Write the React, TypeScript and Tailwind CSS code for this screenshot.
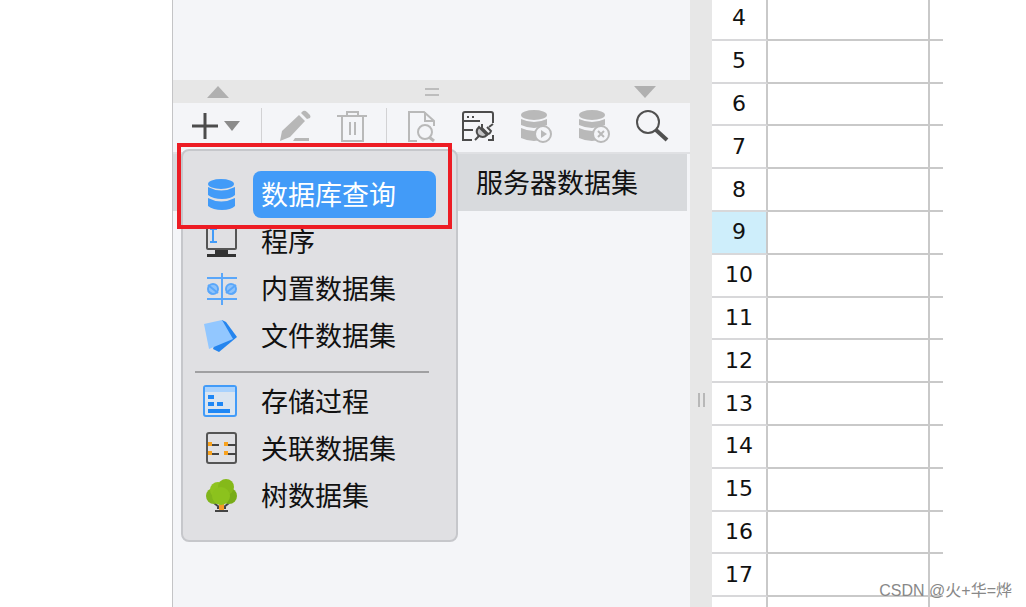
import type { ReactNode } from "react";
import { clsx } from "clsx";

function PencilIcon() {
	return (
		<svg viewBox="0 0 32 32" className="size-8" fill="#b7b7b7">
			<path d="M0 31l2-10L19 5l6 6L10 27zM21 3l2-2q2-1 4 1l3 3q1 2 0 3l-3 1z" />
			<path d="M15 28h14v3H13z" />
		</svg>
	);
}

function TrashIcon() {
	return (
		<svg viewBox="0 0 32 32" className="size-8" fill="none" stroke="#b9b9b9" strokeWidth="2">
			<path d="M1 6h30M11 6V2h11v4M6 6v25h21V6M14 12v13M19 12v13" />
		</svg>
	);
}

function PreviewIcon() {
	return (
		<svg viewBox="0 0 32 32" className="size-8" fill="none" stroke="#b9b9b9" strokeWidth="2">
			<path d="M12 31H4V2h15l10 9v5M20 2v9h9" />
			<circle cx="20" cy="22" r="7" />
			<path d="M24 27l5 4" strokeWidth="3" />
		</svg>
	);
}

function ConnectionIcon() {
	return (
		<svg viewBox="0 0 34 32" className="h-8 w-[34px]" fill="none" stroke="#4c4c4c" strokeWidth="2">
			<path d="M11 30H2V4q0-2 2-2h26q2 0 2 2v9M2 11h17M2 20h10" />
			<path d="M6 7h2M11 7h2" />
			<path d="M14 30l4-4M28 17l4-3M27 30h5v-5" />
			<path d="M18 17q-4 4-1 8q5 4 9 0l-8-8z" fill="#c4c4c6" />
			<path d="M21 14v4l6 6q2 0 3-3l-4-4" />
		</svg>
	);
}

function DatabaseIcon({ badge }: { badge: "run" | "stop" }) {
	return (
		<svg viewBox="0 0 34 34" className="size-[34px]" fill="#b9b9b9">
			<ellipse cx="15" cy="6" rx="13" ry="5" />
			<path d="M2 10q13 6 26 0v6q-13 6-26 0z" />
			<path d="M2 19q13 6 26 0v10q-13 6-26 0z" />
			<circle cx="24" cy="25" r="8" fill="#f4f5f8" stroke="#b9b9b9" strokeWidth="2" />
			{badge === "run" ? (
				<path d="M22 21l6 4-6 4z" />
			) : (
				<path d="M21 22l6 6M27 22l-6 6" stroke="#b9b9b9" strokeWidth="2" />
			)}
		</svg>
	);
}

function SearchIcon() {
	return (
		<svg viewBox="0 0 34 34" className="size-[34px]" fill="none" stroke="#505050">
			<circle cx="13" cy="13" r="11" strokeWidth="2" />
			<path d="M21 21l11 10" strokeWidth="4" />
		</svg>
	);
}

function QueryIcon() {
	return (
		<svg viewBox="0 0 34 34" className="size-[34px]" fill="#429bf8">
			<ellipse cx="18" cy="6" rx="13" ry="5" />
			<path d="M5 9q13 7 27 0v8q-4 4-13 4T5 17z" />
			<path d="M5 20q13 7 27 0v8q-4 4-13 4T5 28z" />
		</svg>
	);
}

function ProgramIcon() {
	return (
		<svg viewBox="0 0 34 34" className="size-[34px]" fill="none">
			<rect x="4" y="1" width="29" height="23" rx="1" stroke="#555" strokeWidth="2" />
			<path d="M12 25h13v4h8v3H4v-3h8z" fill="#333" />
			<path d="M7 4h7M10 4v13M7 17h7" stroke="#429bf8" strokeWidth="2" />
		</svg>
	);
}

function BuiltInIcon() {
	return (
		<svg viewBox="0 0 34 34" className="size-[34px]" fill="none" stroke="#5aa7fa" strokeWidth="2">
			<path d="M4 6h30M4 27h30M19 1v32" />
			<circle cx="10" cy="17" r="5" fill="#8ec3fb" />
			<circle cx="28" cy="17" r="5" fill="#8ec3fb" />
			<path d="M5 13l10 8M33 13l-10 8M5 19l4 3M33 19l-4 3" />
		</svg>
	);
}

function FileIcon() {
	return (
		<svg viewBox="0 0 34 34" className="size-[34px]">
			<path d="M19 1l4 2 11 15-18 15-6-3z" fill="#2585ee" />
			<path d="M1 5l18-4 11 19-24 10z" fill="#92c7ff" />
		</svg>
	);
}

function ProcedureIcon() {
	return (
		<svg viewBox="0 0 34 34" className="size-[34px]" fill="#1f87f5">
			<rect x="1" y="1" width="32" height="30" rx="2" fill="#dbe5f0" stroke="#429bf8" strokeWidth="2" />
			<path d="M2 2h30v5H2z" fill="#a9d2fd" />
			<path d="M5 10h6v4H5zM5 17h6v4H5zM14 17h6v4h-6zM5 24h22v4H5z" />
		</svg>
	);
}

function RelationIcon() {
	return (
		<svg viewBox="0 0 34 34" className="size-[34px]" fill="none">
			<rect x="4" y="1" width="29" height="30" rx="2" stroke="#555" strokeWidth="2" />
			<path d="M8 13h8M25 13h8M8 22h8M25 22h8" stroke="#444" strokeWidth="2" />
			<path d="M5 10h4v4H5zM5 19h4v4H5zM21 10h4v4h-4zM21 19h4v4h-4z" fill="#f9a21d" />
		</svg>
	);
}

function TreeIcon() {
	return (
		<svg viewBox="0 0 34 34" className="size-[34px]">
			<path d="M11 24l5 4M26 24l-5 4M12 32h13M14 29h9" stroke="#444" strokeWidth="2" />
			<path d="M16 22h5v9h-5z" fill="#f59a28" />
			<circle cx="11" cy="17" r="8" fill="#80b51c" />
			<circle cx="26" cy="17" r="8" fill="#78ac18" />
			<circle cx="15" cy="11" r="8" fill="#8fc31f" />
			<circle cx="23" cy="8" r="8" fill="#85b919" />
			<circle cx="18" cy="17" r="9" fill="#8cc21d" />
		</svg>
	);
}

const menuGroups: { label: string; icon: ReactNode }[][] = [
	[
		{ label: "数据库查询", icon: <QueryIcon /> },
		{ label: "程序", icon: <ProgramIcon /> },
		{ label: "内置数据集", icon: <BuiltInIcon /> },
		{ label: "文件数据集", icon: <FileIcon /> },
	],
	[
		{ label: "存储过程", icon: <ProcedureIcon /> },
		{ label: "关联数据集", icon: <RelationIcon /> },
		{ label: "树数据集", icon: <TreeIcon /> },
	],
];

const rows = Array.from({ length: 15 }, (_, i) => i + 4);

function DatasetMenu() {
	return (
		<div className="absolute top-[149px] left-2 w-[277px] rounded-lg border-2 border-[#c6c7cb] bg-[#e0e0e3] pt-5 pb-[21px]">
			{menuGroups.map((group, index) => (
				<div key={group[0].label}>
					{index > 0 && <hr className="mt-3 mr-[27px] mb-[5px] ml-3 border-t-2 border-[#a0a0a2]" />}
					{group.map((item) => {
						const active = item.label === "数据库查询";
						return (
							<button key={item.label} type="button" className="flex h-[47px] w-full items-center gap-4 pr-5 pl-5">
								{item.icon}
								<span
									className={clsx(
										"flex h-full flex-1 items-center rounded-lg pl-2",
										active ? "bg-[#429bf8] text-white" : "text-[#111]",
									)}
								>
									{item.label}
								</span>
							</button>
						);
					})}
				</div>
			))}
			<div className="pointer-events-none absolute -top-2 -left-1.5 h-[86px] w-[275px] border-4 border-[#ed1c24]" />
		</div>
	);
}

function Toolbar() {
	return (
		<div className="flex h-[51px] items-center border-b-2 border-[#e0e1e4] pb-1 pl-[18px]">
			<button type="button" aria-label="Add" className="flex items-center gap-1">
				<svg viewBox="0 0 28 28" className="size-7" stroke="#4c4c4c" strokeWidth="3">
					<path d="M1 14h26M14 1v26" />
				</svg>
				<svg viewBox="0 0 18 10" className="h-2.5 w-[18px]" fill="#8b8b8b">
					<path d="M1 0h16L9 10z" />
				</svg>
			</button>
			<span className="ml-5 h-9 w-px bg-[#d2d2d4]" />
			<div className="flex items-center gap-6 pl-[18px]">
				<button type="button" aria-label="Edit"><PencilIcon /></button>
				<button type="button" aria-label="Delete"><TrashIcon /></button>
				<span className="-mx-1.5 h-9 w-px bg-[#d2d2d4]" />
				<button type="button" aria-label="Preview"><PreviewIcon /></button>
				<button type="button" aria-label="Connection"><ConnectionIcon /></button>
				<button type="button" aria-label="Run"><DatabaseIcon badge="run" /></button>
				<button type="button" aria-label="Stop"><DatabaseIcon badge="stop" /></button>
				<button type="button" aria-label="Search"><SearchIcon /></button>
			</div>
		</div>
	);
}

export default function App() {
	return (
		<div className="relative flex h-screen overflow-hidden bg-white pr-[83px] pl-[172px] font-['Noto_Sans_CJK_SC',sans-serif] text-[27px]">
			<section className="relative flex-1 border-l border-[#c4c4c6] bg-[#f4f5f8]">
				<div className="h-20" />
				<div className="flex h-[23px] items-center justify-between bg-[#e7e7e7] pr-[34px] pl-[34px]">
					<svg viewBox="0 0 22 12" className="h-3 w-[22px]" fill="#b0b0b0">
						<path d="M0 12h22L11 0z" />
					</svg>
					<span className="h-2 w-3.5 border-y-2 border-[#bdbdbd]" />
					<svg viewBox="0 0 22 12" className="h-3 w-[22px]" fill="#b0b0b0">
						<path d="M0 0h22L11 12z" />
					</svg>
				</div>
				<Toolbar />
				<div className="mr-[3px] flex h-[57px] items-center bg-[#d8dadd] pl-[303px] text-[#111]">服务器数据集</div>
				<DatasetMenu />
			</section>
			<div className="flex w-[22px] items-center justify-center bg-[#e7e7e7] pt-48">
				<span className="h-3.5 w-[7px] border-x-2 border-[#b8b8b8]" />
			</div>
			<div className="w-[231px] overflow-hidden">
				<table className="-mt-0.5 h-[642px] w-full table-fixed border-separate border-spacing-0 font-['DejaVu_Sans',sans-serif] text-[22px] leading-6 text-[#111]">
					<colgroup>
						<col className="w-14" />
						<col className="w-[162px]" />
						<col />
					</colgroup>
					<tbody>
						{rows.map((row) => (
							<tr key={row}>
								<th
									scope="row"
									className={clsx(
										"border-r-2 border-b-2 border-r-[#c9c9c9] border-b-[#d8d8da] font-normal",
										row === 9 && "bg-[#ceeefb]",
									)}
								>
									{row}
								</th>
								<td className="border-r-2 border-b-2 border-[#c9c9c9]" />
								<td className="border-b-2 border-[#c9c9c9]" />
							</tr>
						))}
					</tbody>
				</table>
			</div>
			<p className="absolute right-3.5 bottom-1 font-['Liberation_Sans','Noto_Sans_CJK_SC',sans-serif] text-base leading-6 text-[#888]">
				CSDN @火+华=烨
			</p>
		</div>
	);
}
